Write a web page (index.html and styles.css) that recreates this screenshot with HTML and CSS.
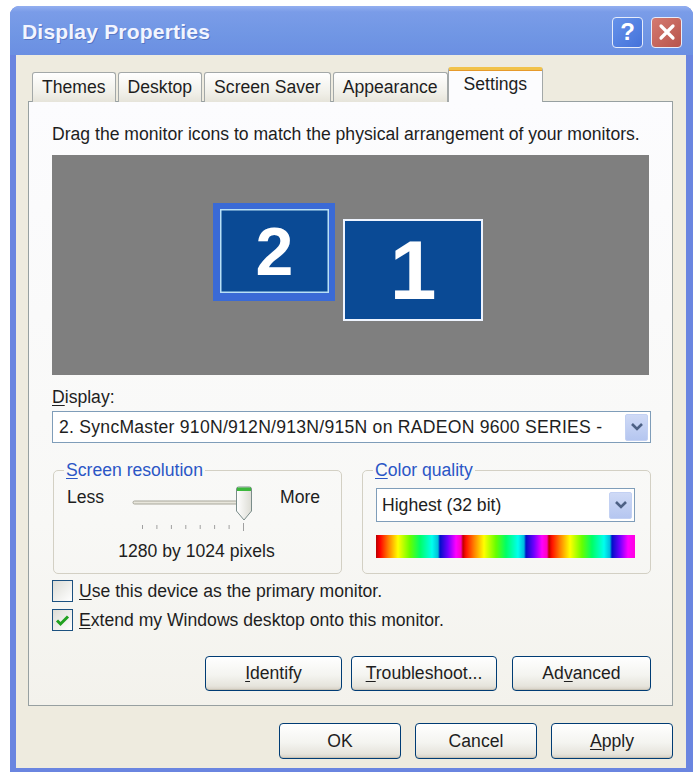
FILE: index.html
```html
<!DOCTYPE html>
<html lang="en">
<head>
<meta charset="utf-8">
<title>Display Properties</title>
<link rel="stylesheet" href="styles.css">
</head>
<body>
<div class="window">
  <div class="titlebar">
    <span class="title">Display Properties</span>
    <div class="title-buttons">
      <span class="tbtn help">?</span>
      <span class="tbtn close">
        <svg width="20" height="20" viewBox="0 0 20 20"><path d="M4 4 L16 16 M16 4 L4 16" stroke="#fff" stroke-width="3.2" stroke-linecap="round"/></svg>
      </span>
    </div>
  </div>

  <div class="client">
    <div class="tabs">
      <div class="tab">Themes</div>
      <div class="tab">Desktop</div>
      <div class="tab">Screen Saver</div>
      <div class="tab">Appearance</div>
      <div class="tab active">Settings</div>
    </div>

    <div class="panel">
      <p class="hint">Drag the monitor icons to match the physical arrangement of your monitors.</p>

      <div class="arrangement">
        <div class="monitor second selected"><span>2</span></div>
        <div class="monitor first"><span>1</span></div>
      </div>

      <div class="field-label"><u>D</u>isplay:</div>
      <div class="select display-select">
        <span class="select-text">2. SyncMaster 910N/912N/913N/915N on RADEON 9600 SERIES -</span>
        <span class="drop">
          <svg width="14" height="10" viewBox="0 0 14 10"><path d="M2 2 L7 7 L12 2" fill="none" stroke="#4d6185" stroke-width="2.6"/></svg>
        </span>
      </div>

      <div class="groups">
        <fieldset class="group resolution">
          <legend><u>S</u>creen resolution</legend>
          <div class="slider-row">
            <span class="less">Less</span>
            <svg class="slider" width="125" height="50" viewBox="0 0 125 50">
              <rect x="3" y="16" width="106" height="3" rx="1.5" fill="#e8e6dc" stroke="#a7a69a" stroke-width="1"/>
              <g stroke="#a0a0a0" stroke-width="1">
                <line x1="12.5" y1="40" x2="12.5" y2="44"/>
                <line x1="26.9" y1="40" x2="26.9" y2="44"/>
                <line x1="41.4" y1="40" x2="41.4" y2="44"/>
                <line x1="55.8" y1="40" x2="55.8" y2="44"/>
                <line x1="70.2" y1="40" x2="70.2" y2="44"/>
                <line x1="84.6" y1="40" x2="84.6" y2="44"/>
                <line x1="99.1" y1="40" x2="99.1" y2="44"/>
                <line x1="113.5" y1="38" x2="113.5" y2="46"/>
              </g>
              <defs>
                <linearGradient id="thumbFill" x1="0" y1="0" x2="1" y2="0">
                  <stop offset="0" stop-color="#ffffff"/>
                  <stop offset="1" stop-color="#dcdcd4"/>
                </linearGradient>
              </defs>
              <path d="M106.5 4 Q106.5 2 108.5 2 H119.5 Q121.5 2 121.5 4 V26 L114 35 L106.5 26 Z" fill="url(#thumbFill)" stroke="#7a8c8a" stroke-width="1"/>
              <rect x="107" y="2.5" width="14" height="3.5" fill="#3cb83c"/>
            </svg>
            <span class="more">More</span>
          </div>
          <div class="res-value">1280 by 1024 pixels</div>
        </fieldset>

        <fieldset class="group color">
          <legend><u>C</u>olor quality</legend>
          <div class="select color-select">
            <span class="select-text">Highest (32 bit)</span>
            <span class="drop">
              <svg width="14" height="10" viewBox="0 0 14 10"><path d="M2 2 L7 7 L12 2" fill="none" stroke="#4d6185" stroke-width="2.6"/></svg>
            </span>
          </div>
          <div class="spectrum"></div>
        </fieldset>
      </div>

      <div class="checks">
        <label class="check"><span class="box"></span><span><u>U</u>se this device as the primary monitor.</span></label>
        <label class="check"><span class="box">
          <svg width="15" height="13" viewBox="0 0 15 13"><path d="M2 6.5 L5.5 10 L13 2.5" fill="none" stroke="#21a121" stroke-width="3"/></svg>
        </span><span><u>E</u>xtend my Windows desktop onto this monitor.</span></label>
      </div>

      <div class="panel-actions">
        <button class="btn identify"><u>I</u>dentify</button>
        <button class="btn troubleshoot"><u>T</u>roubleshoot...</button>
        <button class="btn advanced">Ad<u>v</u>anced</button>
      </div>
    </div>

    <div class="dialog-actions">
      <button class="btn dlg">OK</button>
      <button class="btn dlg">Cancel</button>
      <button class="btn dlg"><u>A</u>pply</button>
    </div>
  </div>
</div>
</body>
</html>
```

FILE: styles.css
```css
* {
  box-sizing: border-box;
}

body {
  margin: 0;
  background: #ffffff;
  font-family: "Liberation Sans", Arial, sans-serif;
  font-size: 17.6px;
  color: #1e1e1e;
}

u {
  text-decoration: underline;
  text-underline-offset: 2px;
}

/* window frame */
.window {
  margin: 6px 1px 0 10px;
  height: 766px;
  display: flex;
  flex-direction: column;
  background: #6a85e0;
  border-radius: 9px 9px 0 0;
}

.titlebar {
  height: 49px;
  flex: none;
  display: flex;
  align-items: center;
  justify-content: space-between;
  padding: 3px 11px 0 12px;
  border-radius: 9px 9px 0 0;
  background: linear-gradient(#93aff0 0%, #7a9ce8 12%, #7096e4 60%, #6b8fe2 100%);
}

.title {
  font-weight: bold;
  font-size: 21px;
  color: #f2f5ff;
  text-shadow: 1px 1px 0 rgba(40, 60, 140, 0.35);
  letter-spacing: 0.2px;
}

.title-buttons {
  display: flex;
  gap: 8px;
}

.tbtn {
  width: 31px;
  height: 31px;
  border: 1.5px solid #e6ecfb;
  border-radius: 4px;
  display: flex;
  align-items: center;
  justify-content: center;
}

.tbtn.help {
  background: linear-gradient(135deg, #6592ea, #4572da);
  color: #ffffff;
  font-weight: bold;
  font-size: 24px;
}

.tbtn.close {
  background: linear-gradient(135deg, #d57a70, #b8544c);
}

/* dialog client area */
.client {
  flex: 1;
  margin: 0 7px 4px 6px;
  background: #eeebdf;
  padding: 12px 13px 0 12px;
  display: flex;
  flex-direction: column;
}

.tabs {
  display: flex;
  align-items: flex-end;
  height: 35px;
  margin: 0 0 -1px 4px;
  position: relative;
  z-index: 1;
}

.tab {
  height: 30px;
  padding: 0 9px;
  margin-right: 2px;
  display: flex;
  align-items: center;
  border: 1px solid #a3a8a8;
  border-bottom: none;
  border-radius: 3px 3px 0 0;
  background: linear-gradient(#ffffff, #f0efe8 70%, #e6e4da);
  color: #1e1e1e;
  white-space: nowrap;
}

.tab.active {
  height: 35px;
  padding: 0 15px 4px;
  margin-left: -2px;
  background: #fcfcfe;
  border-top: 3px solid #f1c24a;
  box-shadow: inset 0 1px 0 #e69a2c;
}

.panel {
  height: 605px;
  border: 1px solid #97a0a1;
  background: linear-gradient(#fcfcfe 0%, #f8f8f6 70%, #f3f2ec 100%);
  padding: 22px 21px 0 23px;
  display: flex;
  flex-direction: column;
}

.hint {
  margin: 0;
  line-height: 20px;
  white-space: nowrap;
}

/* monitor arrangement canvas */
.arrangement {
  position: relative;
  margin: 11px 2px 0 0;
  height: 220px;
  background: #7f7f7f;
}

.monitor {
  position: absolute;
  background: #0a4a95;
  color: #ffffff;
  font-weight: bold;
  display: flex;
  align-items: center;
  justify-content: center;
}

.monitor.second {
  left: 161px;
  top: 48px;
  width: 122px;
  height: 98px;
  border: 6px solid #3a6ad6;
  border-width: 6px 6px 8px 7px;
  box-shadow: inset 0 0 0 1.5px #b8e0f6;
  font-size: 68px;
}

.monitor.first {
  left: 291px;
  top: 64px;
  width: 140px;
  height: 102px;
  border: 2px solid #eef4ff;
  font-size: 84px;
}

.monitor span {
  line-height: 1;
}

.field-label {
  margin-top: 12px;
  line-height: 20px;
}

/* combo boxes */
.select {
  display: flex;
  align-items: center;
  border: 1px solid #7f9db9;
  background: #ffffff;
  padding: 0 2px 0 6px;
}

.select-text {
  flex: 1;
  overflow: hidden;
  white-space: nowrap;
}

.drop {
  flex: none;
  width: 23px;
  height: 27px;
  display: flex;
  align-items: center;
  justify-content: center;
  border-radius: 2px;
  background: linear-gradient(#cfdaf6, #b5c6f0);
  border: 1px solid #c3d1f3;
}

.display-select {
  margin-top: 4px;
  height: 32px;
}

.display-select .select-text {
  letter-spacing: 0.25px;
}

.groups {
  display: flex;
  gap: 20px;
  margin-top: 17px;
}

.group {
  margin: 0;
  border: 1px solid #d3d0c4;
  border-radius: 5px;
  min-width: 0;
}

.group legend {
  color: #2b56c6;
  line-height: 20px;
  padding: 0 2px;
  margin-left: -3px;
}

.group.resolution {
  width: 289px;
  margin-left: 1px;
  padding: 5px 10px 12px 13px;
}

.group.color {
  flex: 1;
  padding: 8px 15px 15px 13px;
}

.slider-row {
  display: flex;
  align-items: flex-start;
  height: 50px;
}

.slider-row .less {
  width: 63px;
  margin-top: 2px;
  line-height: 20px;
}

.slider-row .more {
  margin: 2px 0 0 25px;
  line-height: 20px;
}

.res-value {
  margin-top: 6px;
  line-height: 20px;
  text-align: center;
  padding-right: 5px;
}

.color-select {
  height: 34px;
  padding-left: 5px;
}

.spectrum {
  margin-top: 13px;
  height: 23px;
  background: linear-gradient(90deg,
    #b80000 0px, #ff0000 4px, #ff7a00 12px, #ffff00 22px, #66ff00 34px, #00ff66 44px,
    #00ffee 56px, #00c0d8 62px, #0010c8 64px, #7000ff 72px, #ff00ff 80px, #ff00c0 85px,
    #c00000 87px, #ff1000 90px, #ff8000 98px, #ffff00 108px, #66ff00 120px, #00ff66 130px,
    #00ffee 142px, #00b8e0 148px, #0010c8 150px, #7000ff 158px, #ff00ff 166px, #ff00c0 171px,
    #c00000 173px, #ff1000 176px, #ff8000 184px, #ffff00 194px, #66ff00 206px, #00ff66 216px,
    #00ffee 228px, #00b8e0 234px, #0010c8 236px, #7000ff 244px, #ff00ff 252px, #ff00e0 259px);
}

/* check boxes */
.checks {
  margin-top: 6px;
  display: flex;
  flex-direction: column;
  gap: 7px;
}

.check {
  display: flex;
  align-items: center;
  gap: 6px;
  line-height: 20px;
}

.box {
  width: 21px;
  height: 22px;
  border: 1px solid #1c5180;
  background: linear-gradient(135deg, #dcdcd6, #ffffff);
  display: flex;
  align-items: center;
  justify-content: center;
}

/* push buttons */
.btn {
  font-family: inherit;
  font-size: 17.6px;
  color: #1e1e1e;
  height: 35px;
  padding: 0;
  border: 1px solid #003c74;
  border-radius: 4px;
  background: linear-gradient(#ffffff 0%, #f4f4f0 55%, #e6e4dc 88%, #d6d0c5 100%);
  box-shadow: inset 0 -1px 0 #c8c3b6;
}

.panel-actions {
  margin-top: 25px;
  display: flex;
  justify-content: flex-end;
}

.btn.identify {
  width: 137px;
}

.btn.troubleshoot {
  width: 146px;
  margin-left: 9px;
}

.btn.advanced {
  width: 139px;
  margin-left: 15px;
}

.dialog-actions {
  margin-top: 17px;
  display: flex;
  justify-content: flex-end;
  gap: 14px;
}

.btn.dlg {
  width: 122px;
  height: 36px;
}
```
